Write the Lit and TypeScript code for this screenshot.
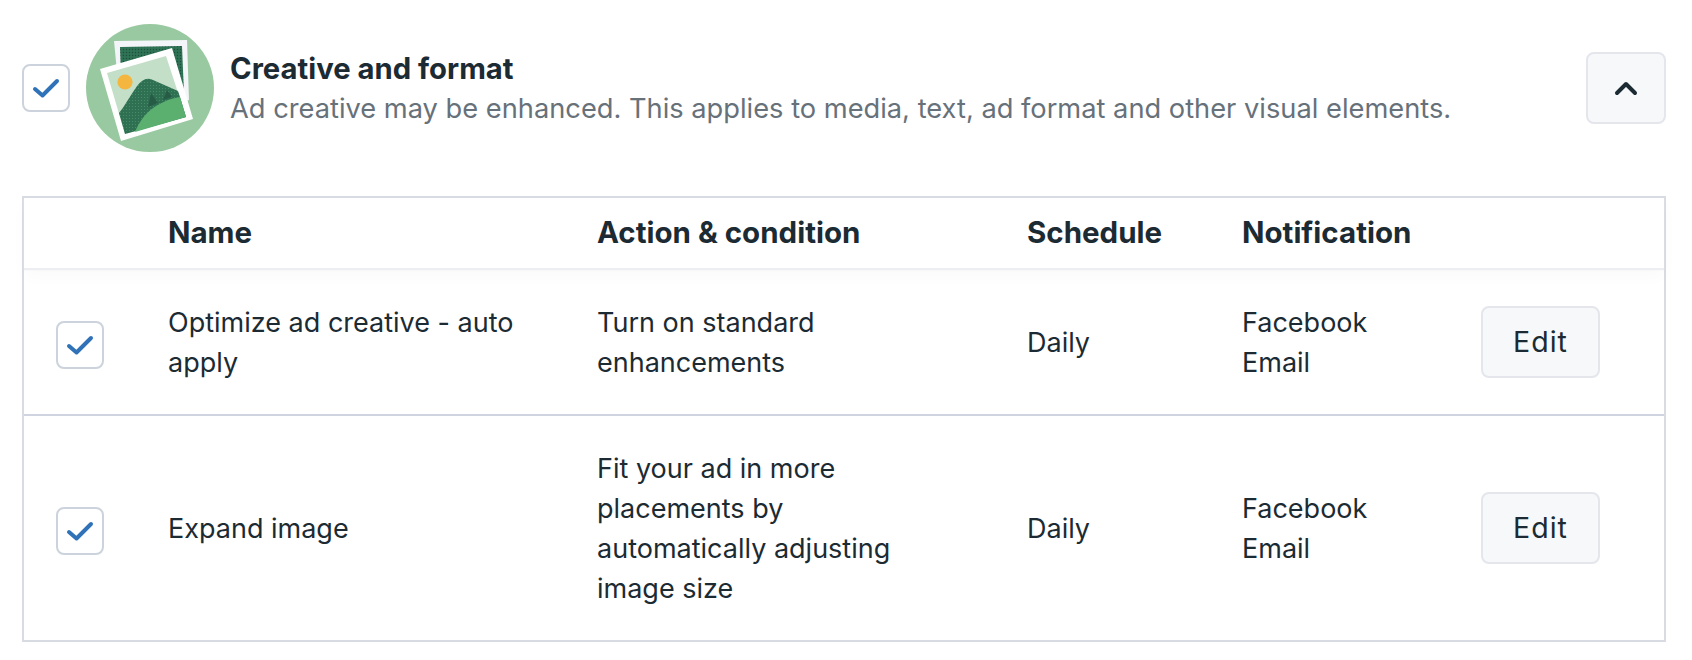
import { LitElement, html, css, svg } from "lit";
import { customElement } from "lit/decorators.js";

const check = html`<span class="cb"><svg width="28" height="22" viewBox="0 0 28 22"><path d="M3 12 L10.5 18.5 L25 4" fill="none" stroke="#2f72b8" stroke-width="4" stroke-linecap="round" stroke-linejoin="round"/></svg></span>`;

const art = svg`
  <defs>
    <pattern id="back" width="3" height="3" patternUnits="userSpaceOnUse"><rect width="3" height="3" fill="#2f7355"/><circle cx="1.5" cy="1.5" r=".7" fill="#1d4d3b"/></pattern>
    <pattern id="hill" width="3" height="3" patternUnits="userSpaceOnUse"><rect width="3" height="3" fill="#2f7053"/><circle cx="1.5" cy="1.5" r=".5" fill="#4f9570"/></pattern>
    <pattern id="tree" width="2" height="2" patternUnits="userSpaceOnUse"><rect width="2" height="2" fill="#2f7053"/><circle cx="1" cy="1" r=".7" fill="#16352c"/></pattern>
  </defs>
  <circle cx="64" cy="64" r="64" fill="#99c9a0"/>
  <polygon points="28,17 101,16 103,76 36,100" fill="#f3f5f8"/>
  <polygon points="34,23 96,22 98,70 36,80" fill="url(#back)"/>
  <polygon points="14,45 86,24 107,95 35,117" fill="#fff"/>
  <polygon points="21,49 80,32 100,93 39,110" fill="#c3dfc8"/>
  <path d="M33 89 C42 78 49 62 56 57 Q61 53 67 56 L92 67 L94 73 L100 93 L39 110 Z" fill="url(#hill)"/>
  <path d="M49 108 C53 98 60 88 70 82 C78 77 86 74 94 73 L100 93 Z" fill="#5bb070"/>
  <path d="M65 69 L72 79 L62 83 Z M81 66 L86 73 L77 76 Z" fill="url(#tree)"/>
  <circle cx="39" cy="58" r="7.6" fill="#f4b63f"/>`;

const rows = [
  { name: "Optimize ad creative - auto apply", action: "Turn on standard enhancements" },
  { name: "Expand image", action: "Fit your ad in more placements by automatically adjusting image size" },
];

@customElement("app-root")
export class AppRoot extends LitElement {
  static styles = css`
    :host { display: block; width: 1692px; height: 660px; background: #fff; overflow: hidden;
      font-family: Inter, "Liberation Sans", sans-serif; color: #1c2b33; }
    .head { display: flex; align-items: center; height: 128px; padding: 24px 26px 0 22px; box-sizing: content-box; }
    .head .cb { margin-right: 16px; }
    .art { flex: none; margin-right: 16px; display: block; }
    .txt { flex: 1; padding-top: 1px; }
    .title { font-size: 29.25px; font-weight: 700; line-height: 39px; padding-bottom: 1px; }
    .sub { font-size: 27.25px; line-height: 40px; color: #67717a; }
    .cb { flex: none; box-sizing: border-box; width: 48px; height: 48px; border: 2px solid #ccd3dc; border-radius: 8px;
      display: flex; align-items: center; justify-content: center; background: #fff; }
    .toggle { flex: none; box-sizing: border-box; width: 80px; height: 72px; border: 2px solid #e4e6ec; border-radius: 8px;
      background: #f6f8fa; display: flex; align-items: center; justify-content: center; }
    .table { margin: 44px 26px 0 22px; border: 2px solid #d9dbe3; height: 446px; box-sizing: border-box; }
    .grid { display: grid; grid-template-columns: 144px 429px 430px 215px 239px 1fr; align-items: center; font-size: 27px; line-height: 40px; }
    .hdr { height: 70px; padding-bottom: 2px; box-sizing: border-box; font-weight: 700; font-size: 29.5px; box-shadow: 0 2px 1px #eceef1, 0 8px 16px rgba(0,0,0,.025); }
    .row { border-bottom: 2px solid #d0d4e0; height: 148px; box-sizing: border-box; padding-top: 2px; }
    .row.tall { border-bottom: 0; height: 224px; padding-top: 0; }
    .c0 { padding: 6px 0 0 32px; }
    .name, .action, .plain { padding-top: 2px; }
    .name { padding-right: 40px; }
    .action { padding-right: 110px; }
    .edit { box-sizing: border-box; width: 119px; height: 72px; border: 2px solid #e4e6ec; border-radius: 8px; background: #f6f8fa;
      font: inherit; font-size: 28.5px; letter-spacing: 1px; color: inherit; padding: 0; }
  `;
  render() {
    return html`
      <div class="head">
        ${check}
        <svg class="art" width="128" height="128" viewBox="0 0 128 128">${art}</svg>
        <div class="txt">
          <div class="title">Creative and format</div>
          <div class="sub">Ad creative may be enhanced. This applies to media, text, ad format and other visual elements.</div>
        </div>
        <div class="toggle"><svg width="24" height="16" viewBox="0 0 24 16"><path d="M3 13 L12 4 L21 13" fill="none" stroke="#1c2b33" stroke-width="4" stroke-linecap="round" stroke-linejoin="round"/></svg></div>
      </div>
      <div class="table">
        <div class="grid hdr"><div></div><div>Name</div><div>Action &amp; condition</div><div>Schedule</div><div>Notification</div><div></div></div>
        ${rows.map((r, i) => html`
          <div class="grid row ${i ? "tall" : ""}">
            <div class="c0">${check}</div>
            <div class="name">${r.name}</div>
            <div class="action">${r.action}</div>
            <div class="plain">Daily</div>
            <div class="plain">Facebook<br />Email</div>
            <button class="edit">Edit</button>
          </div>`)}
      </div>`;
  }
}
